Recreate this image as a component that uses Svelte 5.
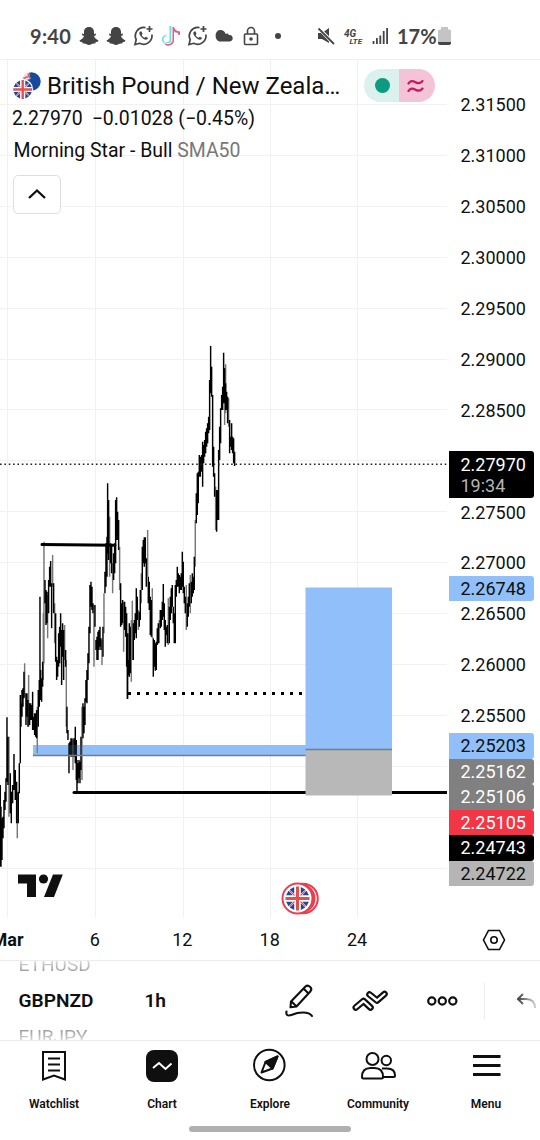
<script>
	const prices = ['2.31500', '2.31000', '2.30500', '2.30000', '2.29500', '2.29000', '2.28500', '', '2.27500', '2.27000', '2.26500', '2.26000', '2.25500'];
	const levels = [
		{ price: '2.25203', kind: 'blue' },
		{ price: '2.25162', kind: 'grey' },
		{ price: '2.25106', kind: 'grey' },
		{ price: '2.25105', kind: 'red' },
		{ price: '2.24743', kind: 'black' },
		{ price: '2.24722', kind: 'silver' }
	];
	const dates = ['Mar', '6', '12', '18', '24'];
	const gridX = [7, 95, 183, 270, 357];
	const gridY = Array.from({ length: 16 }, (_, i) => 104.5 + Math.round(i * 50.9));
	const tabs = ['Watchlist', 'Chart', 'Explore', 'Community', 'Menu'];

	// x, high, low in thirds of a pixel
	const firstUp = [
		0,915,1160, 2,980,1160, 5,1015,1140, 8,1010,1075, 11,960,1045, 14,935,990, 17,895,965, 20,712,905, 23,770,915,
		30,880,1000, 33,935,1030, 37,915,970, 41,822,930, 45,870,960, 49,905,1030, 54,935,1030, 57,850,940, 60,645,850,
		62,670,740, 65,630,710, 68,625,680, 71,575,655, 77,640,735, 80,640,710, 83,660,740, 88,670,735, 91,670,720,
		94,675,720, 97,635,750, 100,710,750, 103,700,765, 106,700,770, 109,690,775, 114,630,740, 117,600,680, 119,350,620,
		121,570,660, 124,595,665, 127,545,620, 134,300,370, 137,330,435, 140,335,430, 145,300,400, 148,260,320,
		151,243,320, 154,310,445, 160,310,400, 166,400,545, 169,530,600, 172,540,590, 175,460,560, 178,440,550,
		181,400,500, 184,450,615, 187,430,530, 190,450,600, 196,510,560, 200,680,760, 203,750,780, 206,790,880,
		209,785,825, 212,775,830, 215,775,830, 221,775,830, 225,740,850, 228,780,900, 230,840,935, 233,850,910,
		236,840,895, 239,845,910, 242,770,870, 248,670,775, 251,680,760, 254,655,735, 257,600,665, 260,570,670,
		263,520,600, 266,440,550, 269,315,460, 272,305,380, 275,320,390, 278,370,400, 284,375,440, 287,480,510,
		290,470,540, 293,455,540, 296,450,510, 299,440,500, 302,475,510, 308,440,530, 314,275,340, 317,190,320,
		320,170,290, 322,10,220, 325,60,240, 331,190,250, 334,195,280, 340,220,300, 343,190,280, 346,60,250,
		349,52,180, 352,95,180, 355,120,210, 361,310,440, 364,370,435, 367,360,430, 373,365,450, 376,380,470,
		379,400,560, 382,460,657
	];
	const firstDown = [
		26,770,1010, 51,940,1075, 73,550,650, 85,585,740, 111,680,820, 129,400,600, 131,185,550, 142,345,475,
		157,225,320, 163,370,490, 193,435,540, 198,540,740, 218,780,870, 245,680,900, 281,375,560, 305,480,555,
		311,340,460, 328,110,290, 337,250,340, 358,200,330, 370,365,515
	];
	const lastUp = [
		111,960,1107, 114,990,1035, 117,880,1040, 120,890,1030, 129,880,990, 132,870,930, 135,850,910, 138,775,925,
		141,800,870, 147,845,890, 150,780,870, 156,650,780, 159,630,700, 162,622,710, 165,622,700, 168,685,770,
		174,740,820, 177,755,840, 180,800,915, 183,810,920, 189,925,1040, 192,930,1010, 195,940,1022, 198,935,1020,
		201,895,945, 204,880,940, 210,840,895, 213,840,890, 216,815,870, 219,762,860, 222,820,900, 225,870,950,
		228,890,915, 231,885,940, 237,830,940, 240,800,870, 243,775,850, 246,765,830, 249,830,880, 252,850,940,
		255,765,940, 258,750,800, 261,710,770, 264,730,770, 267,735,790, 270,740,780, 273,730,780, 276,665,770,
		279,695,790, 282,770,820, 285,800,850, 291,820,890, 294,800,860, 297,760,830, 303,755,820, 306,730,800,
		309,740,790, 312,680,780, 318,490,580, 321,430,555, 324,425,520, 327,375,440, 330,380,440, 334,375,425,
		337,335,470, 340,345,400, 343,330,380, 346,305,370, 349,295,350, 352,280,340, 355,260,310, 358,150,300,
		361,48,190, 364,110,200, 367,195,410, 370,350,440, 373,430,500, 379,480,605, 382,480,570, 385,360,570,
		388,290,390, 391,235,340, 394,195,240, 397,170,240, 400,68,220, 403,115,220, 406,160,240, 409,185,240,
		412,200,280, 418,270,370, 421,320,350, 424,280,360, 427,320,370, 430,325,400, 433,365,408
	];
	const lastDown = [
		123,870,1055, 126,812,990, 144,840,900, 153,730,820, 172,600,740, 186,775,925, 207,870,940, 234,805,945,
		288,765,900, 300,735,850, 315,570,710, 376,470,600, 403,115,285, 406,103,250, 415,205,290
	];

	function bars(list, x0, y0) {
		let d = '';
		for (let i = 0; i < list.length; i += 3) {
			const x = (x0 + list[i] / 3 + 0.3).toFixed(2);
			d += `M${x} ${y0 + list[i + 1] / 3}V${y0 + list[i + 2] / 3}`;
		}
		return d;
	}
	const blackBars = bars(firstUp, 0, 480) + bars(lastUp, 90, 330);
	const greyBars = bars(firstDown, 0, 480) + bars(lastDown, 90, 330);
</script>

{#snippet unionJack()}
	<circle r="12" fill="#fff" />
	<g fill="#164a9c">
		<path d="M3.3-4.8V-11.4L7.8-9ZM4.8-3.3H11.4L9-7.8Z" />
		<path d="M-3.3-4.8V-11.4L-7.8-9ZM-4.8-3.3H-11.4L-9-7.8Z" />
		<path d="M3.3 4.8V11.4L7.8 9ZM4.8 3.3H11.4L9 7.8Z" />
		<path d="M-3.3 4.8V11.4L-7.8 9ZM-4.8 3.3H-11.4L-9 7.8Z" />
	</g>
	<path d="M-8-8-3-3M8 8 3 3M8-8 3-3M-8 8-3 3" stroke="#e45b60" stroke-width="1.3" />
	<path d="M0-12V12M-12 0H12" stroke="#e0504f" stroke-width="3" />
{/snippet}

{#snippet snapchat()}
	<svg class="snap" width="20" height="20" viewBox="0 0 20 20">
		<path d="M10 1C6.5 1 5 3.5 5 6v2l-2-.4.2 1.6L5 10c-.7 2-2 3.5-4.5 4.4.3 1.2 1.4 1.4 2.7 1.6l.6 1.5c1.8-.3 2.8 0 3.8.8 1.6 1 3.2 1 4.8 0 1-.8 2-1.1 3.8-.8l.6-1.5c1.3-.2 2.4-.4 2.7-1.6C17 13.5 15.7 12 15 10l1.8-.8.2-1.6-2 .4V6c0-2.5-1.5-5-5-5Z" fill="currentColor" />
	</svg>
{/snippet}

{#snippet whatsapp()}
	<svg width="22" height="22" viewBox="0 0 22 22" fill="none" stroke="currentColor" stroke-width="1.7">
		<path d="M12.5 2.6A8.5 8.5 0 0 0 3.2 14.7L2 19.5l4.7-1.2A8.5 8.5 0 0 0 18.9 9.5" />
		<path d="M16.5 1v6M13.5 4h6" />
		<path d="M7 6.5c-1.2 1-.8 3 .9 5s4 3.6 5.8 3.1c1-.3 1.4-1.3 1.1-1.8l-2-1.1-1.2 1.1c-1.4-.5-2.4-1.5-3-2.8l.9-1.1-.9-2.3Z" fill="currentColor" stroke="none" />
	</svg>
{/snippet}

<main>
	<header class="status">
		<span class="clock">9:40</span>
		<div class="notices">
			{@render snapchat()}
			{@render snapchat()}
			{@render whatsapp()}
			<svg width="20" height="22" viewBox="0 0 20 22" fill="none" stroke-width="2">
				<path d="M10.5 1v13.5a3.8 3.8 0 1 1-4-3.9M10.5 1.5c.5 3 2.3 4.8 5.5 5.3" stroke="#68dfe4" transform="translate(-1 0)" />
				<path d="M12 2v13a4.6 4.6 0 0 1-7.5 3.6M12.5 3c1 2.6 2.8 4 5.5 4.3v2.4" stroke="#e85b87" />
				<path d="M11 1.5v13a4 4 0 1 1-4-3.9" stroke="#fff" stroke-width="1" />
			</svg>
			{@render whatsapp()}
			<svg width="19" height="14" viewBox="0 0 19 14">
				<path d="M5 1a5 5 0 0 1 5.6 4c1-.9 2.5-.6 3.2 1 4.5-1 5.6 6 1 6.5H5.5C-.8 12.5-1 1.5 5 1Z" fill="currentColor" />
			</svg>
			<svg class="lock" width="16" height="20" viewBox="0 0 16 20" fill="none" stroke="currentColor" stroke-width="1.6">
				<rect x="1.5" y="8" width="13" height="10.5" rx="1" />
				<path d="M4.5 8V5a3.5 3.5 0 0 1 7 0v3" />
				<circle cx="8" cy="13" r="1" fill="currentColor" />
			</svg>
			<i class="more"></i>
		</div>
		<div class="signals">
			<svg width="18" height="18" viewBox="0 0 18 18" fill="currentColor">
				<path d="M1 6h4l7-5v15l-7-4H1Z" />
				<path d="M1.5 1 17 17" stroke="#fff" stroke-width="3.5" />
				<path d="M1.5 1.5 17 17" stroke="currentColor" stroke-width="1.8" />
			</svg>
			<span class="lte"><b>4G</b><b>LTE</b></span>
			<svg width="17" height="18" viewBox="0 0 17 18" stroke="currentColor" stroke-width="1.8">
				<path d="M1.5 17v-3M4.9 17v-6M8.3 17V8.5M11.7 17V4M15.1 17V1" />
			</svg>
			<span class="percent">17%</span>
			<svg width="13" height="18" viewBox="0 0 13 18">
				<path d="M3 2.5V0h7v2.5h1.5q1.5 0 1.5 1.5V15H0V4q0-1.5 1.5-1.5Z" fill="#c4c4c4" />
				<path d="M0 15h13v1q0 2-2 2H2q-2 0-2-2Z" fill="#444" />
			</svg>
		</div>
	</header>

	<section class="chart">
		<svg class="plot" width="447" height="858" viewBox="0 60 447 858">
			<g stroke="#f1f1f1">
				{#each gridX as x}
					<path d="M{x + 0.5} 60V918" />
				{/each}
				{#each gridY as y}
					<path d="M0 {y}H447" />
				{/each}
			</g>
			<path d="M74 792.5H447" stroke="#000" stroke-width="3" stroke-linecap="round" />
			<rect x="33" y="745" width="273" height="10" fill="#90bff9" />
			<g stroke-width="1.45">
				<path d={greyBars} stroke="#777" />
				<path d={blackBars} stroke="#000" />
			</g>
			<rect x="33" y="745" width="273" height="10" fill="#90bff9" opacity=".15" />
			<path d="M33 755.5H306" stroke="#77778a" stroke-width="1.5" />
			<rect x="305.5" y="587.5" width="86.5" height="162" fill="#90bff9" />
			<rect x="305.5" y="749.5" width="86.5" height="46" fill="#b8b8b8" />
			<path d="M305.5 749.5H392" stroke="#777b84" stroke-width="1.5" />
			<path d="M42 544.5L115 545.3" stroke="#000" stroke-width="3" stroke-linecap="round" />
			<path d="M128 693.5H304" stroke="#000" stroke-width="3" stroke-dasharray="3 6" />
			<path d="M0 464.3H447" stroke="#222" stroke-width="1.5" stroke-dasharray="1.6 2.76" />
			<path d="M18 874.5H36V897H27V883.5H18ZM53 874.5H62.8L54 897H44Z" fill="#0f0f0f" />
			<circle cx="43.5" cy="879" r="4.6" fill="#0f0f0f" />
			<circle cx="303" cy="898.5" r="14.8" fill="#fff" stroke="#eb3d50" stroke-width="2" />
			<circle cx="300.5" cy="898.5" r="15" fill="#eb3d50" />
			<circle cx="297.5" cy="898.5" r="15" fill="#fff" stroke="#eb3d50" stroke-width="2" />
			<g transform="translate(297.5 898.5)">{@render unionJack()}</g>
		</svg>

		<div class="scale">
			{#each prices as price}
				<span>{price}</span>
			{/each}
			<div class="tag last">2.27970<small>19:34</small></div>
			<div class="tag target">2.26748</div>
			<div class="levels">
				{#each levels as level}
					<div class="tag {level.kind}">{level.price}</div>
				{/each}
			</div>
		</div>

		<div class="legend">
			<div class="title">
				<svg width="28" height="28" viewBox="0 0 28 28">
					<circle cx="18.5" cy="9.5" r="9.2" fill="#164a9c" />
					<path d="M9.3 9A9.2 9.2 0 0 1 16 .6L17.5 7Z" fill="#f3dfe4" />
					<path d="M10.5 6.5 17 3.5M15 1.5l2 5" stroke="#e45b60" stroke-width="1.4" />
					<circle cx="9.7" cy="17.5" r="10.5" fill="#fff" />
					<g transform="translate(9.7 17.5) scale(.79)">{@render unionJack()}</g>
				</svg>
				<h1>British Pound / New Zeala…</h1>
				<div class="pill">
					<span class="open"><i></i></span>
					<span class="approx">
						<svg width="17" height="14" viewBox="0 0 17 14" fill="none" stroke="#c9185b" stroke-width="2.2">
							<path d="M1 5.2C3 1.5 5.5 1.5 8.5 3.2S14 4.6 16 1.3M1 12.7C3 9 5.5 9 8.5 10.7S14 12.1 16 8.8" />
						</svg>
					</span>
				</div>
			</div>
			<p class="quote"><span>2.27970</span><span>−0.01028 (−0.45%)</span></p>
			<p class="study">Morning Star - Bull <em>SMA50</em></p>
			<button aria-label="Collapse">
				<svg width="20" height="12" viewBox="0 0 20 12" fill="none" stroke="#0f0f0f" stroke-width="2.3">
					<path d="M2 10 10 2.5 18 10" />
				</svg>
			</button>
		</div>
	</section>

	<div class="dates">
		<div class="days">
			{#each dates as date, i}
				<span class:month={i === 0}>{date}</span>
			{/each}
		</div>
		<svg width="24" height="22" viewBox="0 0 24 22" fill="none" stroke="#0f0f0f" stroke-width="1.6">
			<path d="M6.5 1.5h11L22.5 11l-5 9.5h-11L1.5 11Z" />
			<circle cx="12" cy="11" r="3.2" />
		</svg>
	</div>

	<div class="toolbar">
		<div class="wheel">
			<span class="prev">ETHUSD</span>
			<b>GBPNZD</b>
			<span class="next">EURJPY</span>
		</div>
		<b class="interval">1h</b>
		<div class="tools">
			<svg width="30" height="36" viewBox="0 0 30 36" fill="none" stroke="#0f0f0f" stroke-width="2.1" stroke-linejoin="round">
				<path d="M6 18.5 20.5 3.5q2-2 4.5.3t.3 4.7L11.5 23.5l-6 .8ZM5.5 17.5l6.5 6.5M18.5 5.5l5 5" />
				<path d="M1.5 28.5c-.8 3.8 1.2 4.8 5.5 3.3 6-2.6 16.5-4 20 1.2" stroke-linecap="round" />
			</svg>
			<svg width="36" height="22" viewBox="0 0 36 22" fill="none" stroke-linecap="round" stroke-linejoin="round">
				<path d="M3.8 17.5 11.5 11l7 6.5M17.5 4.5 25 10.5l7.5-6.5" stroke="#0f0f0f" stroke-width="6.6" />
				<path d="M3.8 17.5 11.5 11l7 6.5M17.5 4.5 25 10.5l7.5-6.5" stroke="#fff" stroke-width="2.3" />
			</svg>
			<svg width="32" height="12" viewBox="0 0 32 12" fill="none" stroke="#0f0f0f" stroke-width="2.2">
				<circle cx="5.8" cy="6" r="3.6" />
				<circle cx="16.3" cy="6" r="3.6" />
				<circle cx="26.8" cy="6" r="3.6" />
			</svg>
		</div>
		<svg class="undo" width="24" height="18" viewBox="0 0 24 18" fill="none" stroke-width="2">
			<defs>
				<linearGradient id="fade"><stop stop-color="#444" /><stop offset="1" stop-color="#ccc" /></linearGradient>
			</defs>
			<path d="M7 2 2 7l5 5M2 7h8q9 0 9 9" stroke="url(#fade)" />
		</svg>
	</div>

	<nav>
		{#each tabs as tab, i}
			<a href="#{tab}">
				<svg width="36" height="36" viewBox="0 0 36 36" fill="none" stroke="#0f0f0f" stroke-width="2">
					{#if i === 0}
						<path d="M7 4h22v27.5l-11-4-11 4ZM12 10.5h12M12 16.5h12M12 22.5h12" />
					{:else if i === 1}
						<rect x="2" y="2" width="32" height="32" rx="8" fill="#0f0f0f" stroke="none" />
						<path d="M9 20l6-5 6.5 6 6-5.5" stroke="#fff" />
					{:else if i === 2}
						<circle cx="17.3" cy="17" r="15.3" />
						<path d="M25.5 8.5 13.5 14 9.5 24.5 20.5 20.5Z" stroke-linejoin="round" />
						<path d="M25.5 8.5 13.5 14l7 6.5Z" fill="#0f0f0f" stroke-linejoin="round" />
					{:else if i === 3}
						<circle cx="12.5" cy="11" r="6" />
						<circle cx="26.3" cy="12.5" r="4.7" />
						<path d="M2 29q0-9 8.5-9h4q8.5 0 8.5 9 0 1.5-1.5 1.5h-18Q2 30.5 2 29ZM22 20.5h5q8 0 8 7 0 1.5-1.5 1.5h-10" />
					{:else}
						<path d="M5 8.5h27.5M5 17.5h27.5M5 26.5h27.5" stroke-width="2.8" />
					{/if}
				</svg>
				{tab}
			</a>
		{/each}
	</nav>
	<i class="handle"></i>
</main>

<style>
	:global(body) {
		background: #fff;
	}

	main {
		width: 540px;
		height: 1140px;
		overflow: hidden;
		background: #fff;
		color: #0f0f0f;
		font-family: Roboto, sans-serif;
		font-size: 18px;
	}

	svg {
		display: block;
		flex: none;
	}

	.status {
		display: flex;
		align-items: center;
		box-sizing: border-box;
		height: 60px;
		padding: 12px 0 0 30px;
		border-bottom: 1px solid #f0f0f0;
		color: #444;
	}

	.clock {
		width: 49px;
		font: 700 20px/24px Lato, sans-serif;
		letter-spacing: 0.3px;
	}

	.notices {
		display: flex;
		align-items: center;
		gap: 6px;
		width: 236px;
	}

	.snap {
		margin-right: 1px;
	}

	.lock {
		margin-left: 3px;
	}

	.more {
		width: 6px;
		height: 6px;
		margin-left: 10px;
		border-radius: 50%;
		background: #444;
	}

	.signals {
		display: flex;
		align-items: center;
		margin-left: 2px;
	}

	.lte {
		display: flex;
		flex-direction: column;
		width: 18px;
		margin: 4px 10px 0 9px;
		font-size: 10px;
		font-style: italic;
		line-height: 8px;
	}

	.lte b + b {
		align-self: flex-end;
		font-size: 8px;
		line-height: 7px;
	}

	.percent {
		margin: 0 1px 0 8px;
		font: 700 20px/24px Lato, sans-serif;
	}

	.chart {
		position: relative;
		display: flex;
		height: 858px;
	}

	.scale {
		position: relative;
		box-sizing: border-box;
		width: 93px;
		padding: 19.4px 0 0 13.5px;
	}

	.scale > span {
		display: block;
		height: 50.9px;
		line-height: 51px;
	}

	.tag {
		box-sizing: border-box;
		width: 85.5px;
		height: 25.5px;
		padding-left: 12px;
		border-radius: 0 3px 3px 0;
		line-height: 26px;
		color: #fff;
	}

	.last {
		position: absolute;
		top: 391px;
		left: 1.5px;
		height: 47px;
		background: #000;
		line-height: 27px;
	}

	.last small {
		display: block;
		font-size: 18px;
		line-height: 15px;
		color: #b5b5b5;
	}

	.target {
		position: absolute;
		top: 515.5px;
		left: 1.5px;
		background: #90bff9;
		color: #0f0f0f;
	}

	.levels {
		position: absolute;
		top: 673px;
		left: 1.5px;
	}

	.blue {
		background: #90bff9;
		color: #0f0f0f;
	}

	.grey {
		background: #808080;
	}

	.red {
		background: #f23645;
	}

	.black {
		background: #000;
	}

	.silver {
		background: #b5b5b5;
		color: #0f0f0f;
	}

	/* sits on top of the grid */
	.legend {
		position: absolute;
		top: 9px;
		left: 13px;
	}

	.title {
		display: flex;
		align-items: center;
		height: 33px;
	}

	h1 {
		width: 310px;
		margin: 1px 0 0 6px;
		font-size: 24px;
		font-weight: 400;
		line-height: 33px;
		white-space: nowrap;
	}

	.pill {
		display: flex;
		width: 71px;
		height: 33px;
		margin-left: 7px;
		border-radius: 17px;
		overflow: hidden;
	}

	.pill span {
		display: flex;
		flex: 1;
		align-items: center;
		justify-content: center;
	}

	.open {
		background: #daf1ed;
	}

	.open i {
		width: 15px;
		height: 15px;
		margin-left: 2px;
		border-radius: 50%;
		background: #0c9a80;
	}

	.pill .approx {
		padding-right: 2px;
		background: #f5c3d7;
	}

	p {
		margin: 0;
		white-space: nowrap;
	}

	.quote {
		display: flex;
		gap: 9px;
		margin: 1px 0 0 -1px;
		font-size: 19.45px;
		line-height: 32px;
	}

	.study {
		margin-left: 0.5px;
		font-size: 19.45px;
		line-height: 32px;
	}

	em {
		font-style: normal;
		color: #777;
	}

	button {
		display: flex;
		align-items: center;
		justify-content: center;
		width: 48px;
		height: 39px;
		margin: 7.5px 0 0;
		padding: 0;
		border: 1.5px solid #dedede;
		border-radius: 5px;
		background: #fff;
	}

	.dates {
		display: flex;
		align-items: center;
		justify-content: space-between;
		box-sizing: border-box;
		height: 43px;
		padding: 1px 34px 0 0;
		border-bottom: 1px solid #ececec;
	}

	.days {
		display: flex;
		margin-left: -36.2px;
	}

	.days span {
		width: 87.4px;
		text-align: center;
	}

	.days .month {
		font-weight: 700;
	}

	.toolbar {
		display: flex;
		align-items: center;
		box-sizing: border-box;
		height: 80px;
		padding-left: 18.5px;
		border-bottom: 1px solid #ececec;
		overflow: hidden;
	}

	.wheel {
		width: 126.5px;
		font-size: 19.1px;
		line-height: 36px;
	}

	.wheel > * {
		display: block;
	}

	.wheel span {
		color: transparent;
		background-clip: text;
	}

	.wheel .prev {
		background-image: linear-gradient(#eee 30%, #999 70%);
	}

	.wheel .next {
		background-image: linear-gradient(#999 30%, #eee 70%);
	}

	.wheel b,
	.interval {
		font-weight: 600;
	}

	.interval {
		width: 141px;
		font-size: 19.1px;
	}

	.tools {
		display: flex;
		align-items: center;
		gap: 37.5px;
		box-sizing: border-box;
		width: 201px;
		height: 36px;
		border-right: 1px solid #ececec;
	}

	.undo {
		margin-left: 31px;
	}

	nav {
		display: flex;
		height: 85px;
	}

	nav a {
		display: flex;
		flex: 1;
		flex-direction: column;
		align-items: center;
		gap: 12px;
		padding-top: 7px;
		color: #0f0f0f;
		font-size: 12px;
		font-weight: 600;
		line-height: 16px;
		text-decoration: none;
	}

	.handle {
		display: block;
		width: 162px;
		height: 6px;
		margin: 0 auto;
		border-radius: 3px;
		background: #b0b0b0;
	}
</style>
